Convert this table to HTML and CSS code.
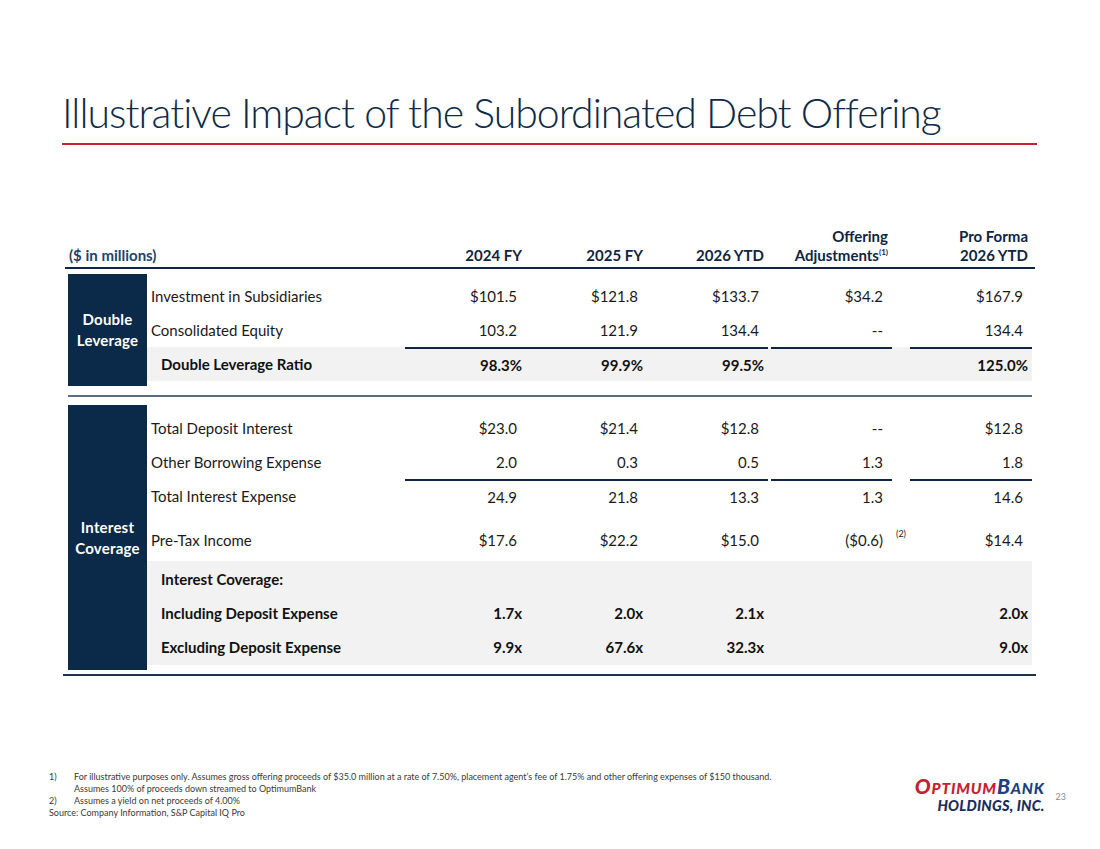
FILE: index.html
```html
<!DOCTYPE html>
<html lang="en">
<head>
<meta charset="utf-8">
<title>Illustrative Impact of the Subordinated Debt Offering</title>
<link rel="stylesheet" href="styles.css">
</head>
<body>
<div class="slide">
  <h1 class="title">Illustrative Impact of the Subordinated Debt Offering</h1>

  <div class="table">
    <div class="head">
      <div class="h-label">($ in millions)</div>
      <div class="h-col">2024 FY</div>
      <div class="h-col">2025 FY</div>
      <div class="h-col">2026 YTD</div>
      <div></div>
      <div class="h-col">Offering<br>Adjustments<sup>(1)</sup></div>
      <div></div>
      <div class="h-col">Pro Forma<br>2026 YTD</div>
      <div></div>
    </div>

    <div class="section sec1">
      <div class="side">Double<br>Leverage</div>
      <div class="rows">
        <div class="row first">
          <div class="lbl">Investment in Subsidiaries</div>
          <div class="num">$101.5</div><div class="num">$121.8</div><div class="num">$133.7</div><div></div>
          <div class="num">$34.2</div><div></div><div class="num">$167.9</div>
        </div>
        <div class="row">
          <div class="lbl">Consolidated Equity</div>
          <div class="num">103.2</div><div class="num">121.9</div><div class="num">134.4</div><div></div>
          <div class="num">--</div><div></div><div class="num">134.4</div>
        </div>
        <div class="row shaded ruled bold">
          <div class="lbl ind">Double Leverage Ratio</div>
          <div class="num pct r">98.3%</div><div class="num pct r">99.9%</div><div class="num pct r">99.5%</div><div></div>
          <div class="num r"></div><div></div><div class="num pct r">125.0%</div>
        </div>
      </div>
    </div>

    <div class="sep"></div>

    <div class="section sec2">
      <div class="side">Interest<br>Coverage</div>
      <div class="rows">
        <div class="row first">
          <div class="lbl">Total Deposit Interest</div>
          <div class="num">$23.0</div><div class="num">$21.4</div><div class="num">$12.8</div><div></div>
          <div class="num">--</div><div></div><div class="num">$12.8</div>
        </div>
        <div class="row">
          <div class="lbl">Other Borrowing Expense</div>
          <div class="num">2.0</div><div class="num">0.3</div><div class="num">0.5</div><div></div>
          <div class="num">1.3</div><div></div><div class="num">1.8</div>
        </div>
        <div class="row ruled">
          <div class="lbl">Total Interest Expense</div>
          <div class="num r">24.9</div><div class="num r">21.8</div><div class="num r">13.3</div><div></div>
          <div class="num r">1.3</div><div></div><div class="num r">14.6</div>
        </div>
        <div class="row tall">
          <div class="lbl">Pre-Tax Income</div>
          <div class="num">$17.6</div><div class="num">$22.2</div><div class="num">$15.0</div><div></div>
          <div class="num">($0.6)</div><div class="note"><sup>(2)</sup></div><div class="num">$14.4</div>
        </div>
        <div class="shade-group">
          <div class="row bold">
            <div class="lbl ind">Interest Coverage:</div>
            <div></div><div></div><div></div><div></div><div></div><div></div><div></div>
          </div>
          <div class="row bold">
            <div class="lbl ind">Including Deposit Expense</div>
            <div class="num pct">1.7x</div><div class="num pct">2.0x</div><div class="num pct">2.1x</div><div></div>
            <div></div><div></div><div class="num pct">2.0x</div>
          </div>
          <div class="row bold">
            <div class="lbl ind">Excluding Deposit Expense</div>
            <div class="num pct">9.9x</div><div class="num pct">67.6x</div><div class="num pct">32.3x</div><div></div>
            <div></div><div></div><div class="num pct">9.0x</div>
          </div>
        </div>
      </div>
    </div>

    <div class="bottom"></div>
  </div>

  <div class="footer">
    <div class="notes">
      <div class="fn"><span class="fn-n">1)</span><span class="fn-t">For illustrative purposes only. Assumes gross offering proceeds of $35.0 million at a rate of 7.50%, placement agent’s fee of 1.75% and other offering expenses of $150 thousand.<br>Assumes 100% of proceeds down streamed to OptimumBank</span></div>
      <div class="fn"><span class="fn-n">2)</span><span class="fn-t">Assumes a yield on net proceeds of 4.00%</span></div>
      <div class="src">Source: Company Information, S&amp;P Capital IQ Pro</div>
    </div>
    <div class="brand">
      <div class="logo">
        <div class="logo-top"><span class="red"><span class="big">O</span>PTIMUM</span><span class="blue"><span class="big">B</span>ANK</span></div>
        <div class="logo-bot">HOLDINGS, INC.</div>
      </div>
      <div class="page">23</div>
    </div>
  </div>
</div>
</body>
</html>
```

FILE: styles.css
```css
* { box-sizing: border-box; }
html, body { margin: 0; padding: 0; background: #fff; }
body { font-family: Lato, "Liberation Sans", sans-serif; color: #1a1a1a; }

.slide {
  width: 1100px;
  height: 849px;
  overflow: hidden;
  display: flex;
  flex-direction: column;
}

.title {
  margin: 87px 0 0 62px;
  width: 975px;
  font-size: 41px;
  font-weight: 300;
  line-height: 52px;
  color: #0f2a48;
  padding-bottom: 4px;
  border-bottom: 2px solid #c8202f;
  letter-spacing: -1px;
  white-space: nowrap;
}

.table {
  margin: 82px 0 0 65px;
  width: 970px;
  font-size: 15px;
}

.head {
  display: grid;
  grid-template-columns: 340px 121px 121px 121px 3px 121px 18px 122px 3px;
  align-items: end;
  border-bottom: 2px solid #0f2544;
  padding-bottom: 2px;
  font-weight: 700;
  line-height: 19px;
  color: #0f2544;
}
.h-label { padding-left: 4px; color: #1f4468; }
.h-col { text-align: right; padding-right: 4px; }
.h-col sup { font-size: 8px; vertical-align: 6px; line-height: 0; }

.section { display: flex; margin-left: 3px; }
.sec1 { margin-top: 5px; }
.sec2 { margin-top: 8px; }

.side {
  width: 79px;
  flex: none;
  background: #0b2a4a;
  color: #fff;
  font-weight: 700;
  line-height: 21px;
  text-align: center;
  display: flex;
  align-items: center;
  justify-content: center;
  letter-spacing: 0.2px;
}

.rows { width: 885px; padding-bottom: 5px; }

.row {
  display: grid;
  grid-template-columns: 258px 121px 121px 121px 3px 121px 18px 122px;
  height: 34px;
  line-height: 34px;
}
.sec1 .row.first { margin-top: 5px; }
.sec2 .row.first { margin-top: 6px; }
.row.tall { height: 48px; padding-top: 10px; }
.row.shaded { background: #f2f2f2; }
.shade-group { background: #f2f2f2; padding: 1px 0 1px; }
.row.bold { font-weight: 700; color: #111; }

.lbl { padding-left: 4px; white-space: nowrap; }
.lbl.ind { padding-left: 14px; }
.num { text-align: right; padding-right: 9px; white-space: nowrap; }
.num.pct { padding-right: 4px; }
.row.ruled .num.r { border-top: 2px solid #0f2544; line-height: 32px; }
.note { font-size: 9px; line-height: 22px; padding-left: 4px; }
.note sup { font-size: 9px; vertical-align: 0; }

.sep { margin: 9px 0 0 3px; width: 964px; height: 2px; background: #5b6e80; }
.bottom { margin: 4px 0 0 -2px; width: 973px; height: 2px; background: #1b3150; }

.footer {
  margin-top: auto;
  margin-bottom: 30px;
  padding: 0 34px 0 49px;
  display: flex;
  justify-content: space-between;
  align-items: flex-end;
}
.notes { font-size: 9px; line-height: 12px; color: #3a3a3a; }
.fn { display: flex; }
.fn-n { width: 25px; flex: none; }
.brand { display: flex; align-items: center; gap: 11px; margin-bottom: 5px; }
.logo { font-family: Lato, "Liberation Sans", sans-serif; font-weight: 900; font-style: italic; text-align: right; }
.logo-top { font-size: 15.5px; line-height: 20px; letter-spacing: 0.8px; }
.logo-top .big { font-size: 21px; }
.red { color: #c8202f; }
.blue { color: #1d3f80; }
.logo-bot { font-size: 14.5px; line-height: 16px; color: #1b2d5c; letter-spacing: 0.2px; }
.page { font-size: 9px; color: #8a8a8a; margin-top: 2px; }
```
